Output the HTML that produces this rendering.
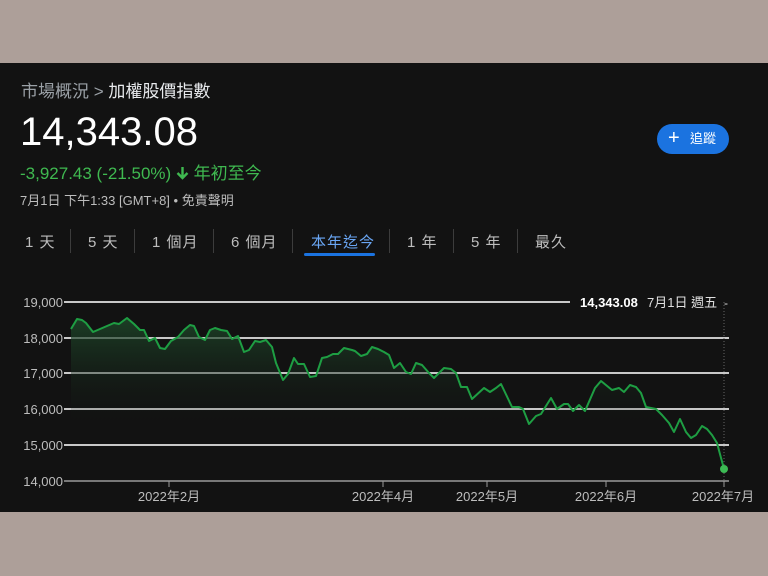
<!DOCTYPE html>
<html><head><meta charset="utf-8"><style>
body{margin:0;width:768px;height:576px;background:#ad9f99;position:relative;overflow:hidden;font-family:"Liberation Sans","Noto Sans CJK TC",sans-serif}
.p{position:absolute;left:0;top:63px;width:768px;height:449px;background:#121212}
.t{position:absolute;white-space:nowrap}
.tab{position:absolute;top:231px;font-size:15px;color:#bdbdbd;letter-spacing:1px}
.sep{position:absolute;top:229px;width:1px;height:24px;background:#3c3c3c}
</style></head><body>
<div class="p"></div>
<div class="t" style="left:21px;top:77px;font-size:17px;color:#9aa0a6">市場概況 &gt; <span style="color:#e8eaed">加權股價指數</span></div>
<div class="t" style="left:20px;top:110px;font-size:40px;color:#fff">14,343.08</div>
<div class="t" style="left:20px;top:159px;font-size:17px;color:#3fb950">-3,927.43 (-21.50%) <svg width="13" height="14" viewBox="0 0 13 14" style="vertical-align:-1px"><path d="M6.5 1v10M1.5 7l5 5 5-5" stroke="#3fb950" stroke-width="2.4" fill="none"/></svg> 年初至今</div>
<div class="t" style="left:20px;top:190px;font-size:13px;color:#bdbdbd">7月1日 下午1:33 [GMT+8] • 免責聲明</div>
<div class="t" style="left:657px;top:124px;width:72px;height:30px;border-radius:15px;background:#1b73e0;color:#fff;font-size:13px;line-height:30px"><span style="position:absolute;left:11px;font-size:20px;top:-1px">+</span><span style="position:absolute;left:33px">追蹤</span></div>
<div class="tab" style="left:25px">1 天</div><div class="sep" style="left:70px"></div>
<div class="tab" style="left:88px">5 天</div><div class="sep" style="left:134px"></div>
<div class="tab" style="left:152px">1 個月</div><div class="sep" style="left:213px"></div>
<div class="tab" style="left:231px">6 個月</div><div class="sep" style="left:292px"></div>
<div class="tab" style="left:311px;color:#6aa7f5">本年迄今</div><div class="sep" style="left:389px"></div>
<div style="position:absolute;left:304px;top:253px;width:71px;height:3px;border-radius:2px;background:#1b73e0"></div>
<div class="tab" style="left:407px">1 年</div><div class="sep" style="left:453px"></div>
<div class="tab" style="left:471px">5 年</div><div class="sep" style="left:517px"></div>
<div class="tab" style="left:535px">最久</div>
<svg style="position:absolute;left:0;top:0" width="768" height="576">
<defs><linearGradient id="g" x1="0" y1="0" x2="0" y2="1"><stop offset="0" stop-color="#1e4a2a" stop-opacity=".8"/><stop offset=".7" stop-color="#121212" stop-opacity="0"/></linearGradient></defs>
<g stroke="#c8c8c8" stroke-width="2">
<line x1="64" y1="302" x2="570" y2="302"/><line x1="64" y1="338" x2="729" y2="338"/><line x1="64" y1="373" x2="729" y2="373"/><line x1="64" y1="409" x2="729" y2="409"/><line x1="64" y1="445" x2="729" y2="445"/></g>
<line x1="64" y1="481" x2="729" y2="481" stroke="#9a9a9a" stroke-width="1.5"/>
<g stroke="#9a9a9a"><line x1="169" y1="481" x2="169" y2="487"/><line x1="383" y1="481" x2="383" y2="487"/><line x1="487" y1="481" x2="487" y2="487"/><line x1="606" y1="481" x2="606" y2="487"/><line x1="724" y1="481" x2="724" y2="487"/></g>
<line x1="724" y1="302" x2="724" y2="481" stroke="#666" stroke-dasharray="1,2"/>
<polygon fill="url(#g)" points="71,329 77,319 82,320 86,323 93,332 100,329 107,326 114,323 119,324 127,318 134,324 140,330 144,330 149,341 155,338 160,348 165,349 171,341 178,337 184,330 190,325 194,326 199,337 205,340 210,330 215,328 221,330 227,331 232,339 238,336 244,352 249,350 255,341 260,342 266,340 272,347 276,363 283,380 288,374 294,358 298,364 304,364 310,377 316,376 322,358 327,357 333,354 338,354 344,348 352,350 355,351 361,356 367,354 372,347 378,349 384,352 389,355 394,368 400,363 406,372 411,374 416,363 422,365 429,373 434,378 444,368 451,369 456,373 461,387 467,387 472,399 484,388 490,392 496,388 501,384 512,407 519,407 523,409 529,424 536,416 541,414 551,398 557,409 564,404 568,404 573,411 579,405 585,411 595,388 601,381 612,390 619,388 624,392 630,385 636,387 641,393 646,407 656,409 662,415 669,423 674,432 680,419 686,432 691,438 696,435 702,426 707,429 712,435 717,443 724,469 724,481 71,481"/>
<polyline fill="none" stroke="#1e9e43" stroke-width="2" stroke-linejoin="round" points="71,329 77,319 82,320 86,323 93,332 100,329 107,326 114,323 119,324 127,318 134,324 140,330 144,330 149,341 155,338 160,348 165,349 171,341 178,337 184,330 190,325 194,326 199,337 205,340 210,330 215,328 221,330 227,331 232,339 238,336 244,352 249,350 255,341 260,342 266,340 272,347 276,363 283,380 288,374 294,358 298,364 304,364 310,377 316,376 322,358 327,357 333,354 338,354 344,348 352,350 355,351 361,356 367,354 372,347 378,349 384,352 389,355 394,368 400,363 406,372 411,374 416,363 422,365 429,373 434,378 444,368 451,369 456,373 461,387 467,387 472,399 484,388 490,392 496,388 501,384 512,407 519,407 523,409 529,424 536,416 541,414 551,398 557,409 564,404 568,404 573,411 579,405 585,411 595,388 601,381 612,390 619,388 624,392 630,385 636,387 641,393 646,407 656,409 662,415 669,423 674,432 680,419 686,432 691,438 696,435 702,426 707,429 712,435 717,443 724,469"/>
<circle cx="724" cy="469" r="4" fill="#3cba54"/>
<g font-size="13" fill="#bdbdbd" text-anchor="end" font-family="Liberation Sans,sans-serif">
<text x="63" y="307">19,000</text><text x="63" y="343">18,000</text><text x="63" y="378">17,000</text><text x="63" y="414">16,000</text><text x="63" y="450">15,000</text><text x="63" y="486">14,000</text></g>
<g font-size="13" fill="#bdbdbd" text-anchor="middle" font-family="Liberation Sans,Noto Sans CJK TC,sans-serif">
<text x="169" y="501">2022年2月</text><text x="383" y="501">2022年4月</text><text x="487" y="501">2022年5月</text><text x="606" y="501">2022年6月</text><text x="723" y="501">2022年7月</text></g>
<text x="580" y="307" font-size="13" fill="#fff" font-weight="bold" font-family="Liberation Sans,sans-serif">14,343.08</text>
<text x="647" y="307" font-size="13" fill="#e0e0e0" font-family="Liberation Sans,Noto Sans CJK TC,sans-serif">7月1日 週五</text>
<text x="724" y="307" font-size="12" fill="#e0e0e0" font-family="Liberation Sans,sans-serif">-</text>
</svg>
</body></html>
